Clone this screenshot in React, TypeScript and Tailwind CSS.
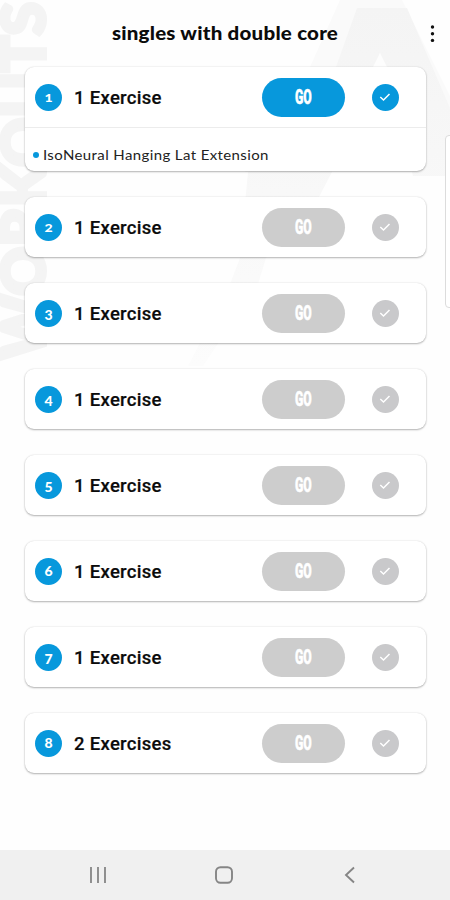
import { clsx } from 'clsx';

interface Workout {
  id: number;
  label: string;
  // old-style numerals: 1 and 2 sit low, 3 4 5 7 hang, 6 and 8 stand tall
  numeral: string;
  active?: boolean;
  exercises?: string[];
}

const workouts: Workout[] = [
  { id: 1, label: '1 Exercise', numeral: 'text-[14px] scale-y-[0.8] pt-px', active: true, exercises: ['IsoNeural Hanging Lat Extension'] },
  { id: 2, label: '1 Exercise', numeral: 'text-[14px] scale-y-[0.8] pt-px' },
  { id: 3, label: '1 Exercise', numeral: 'text-[14px] pt-[3px]' },
  { id: 4, label: '1 Exercise', numeral: 'text-[14px] pt-[3px]' },
  { id: 5, label: '1 Exercise', numeral: 'text-[14px] pt-[3px]' },
  { id: 6, label: '1 Exercise', numeral: 'text-[14px]' },
  { id: 7, label: '1 Exercise', numeral: 'text-[14px] pt-[3px]' },
  { id: 8, label: '2 Exercises', numeral: 'text-[14px]' },
];

const Watermark = () => (
  <svg className="pointer-events-none absolute left-0 top-0" width="450" height="400" viewBox="0 0 450 400" aria-hidden="true">
    <defs>
      <linearGradient id="leg" x1="0" y1="0" x2="0" y2="1">
        <stop offset="0" stopColor="#f4f4f4" />
        <stop offset="0.4" stopColor="#f7f7f7" />
        <stop offset="1" stopColor="#fcfcfc" />
      </linearGradient>
    </defs>
    <path d="M340 0H402L450 96V172H245L310 67Z" fill="#fafafa" />
    <path d="M357 8H407L450 108V176H413L380 53L332 172L319 197L266 258L258 284L203 366H188L230 284L240 258L248 172L336 67Z" fill="url(#leg)" />
    <path d="M380 53L387 67H373Z" fill="#fdfdfd" />
    <text
      transform="translate(44.5 359) rotate(-90)"
      textLength="357"
      lengthAdjust="spacingAndGlyphs"
      fill="#f4f4f4"
      stroke="#f4f4f4"
      strokeWidth="4"
      fontFamily="Lato, sans-serif"
      fontWeight="900"
      fontSize="60"
    >
      WORKOUTS
    </text>
  </svg>
);

const CheckBadge = ({ active }: { active?: boolean }) => (
  <span className={clsx('flex size-[27px] items-center justify-center rounded-full', active ? 'bg-[#0798dc]' : 'bg-[#c9c9cb]')}>
    <svg width="12" height="10" viewBox="0 0 12 10" fill="none" stroke="white" strokeWidth="1.5">
      <path d="M1.3 5L4.5 8L10.5 2" />
    </svg>
  </span>
);

const WorkoutCard = ({ workout }: { workout: Workout }) => {
  const { id, label, numeral, active, exercises } = workout;
  return (
    <section className="rounded-[9px] bg-white shadow-[0_1px_2px_rgba(0,0,0,0.28),0_0_2px_rgba(0,0,0,0.12)]">
      <div className="flex h-[60px] items-center pl-[10px] pr-[27.5px]">
        <span className="flex size-[27px] items-center justify-center rounded-full bg-[#0798dc]">
          <span className={clsx("font-['Lato',sans-serif] font-black leading-none text-white", numeral)}>{id}</span>
        </span>
        <h2 className="ml-[12px] flex-1 pt-[2px] font-['Roboto',sans-serif] text-[18.5px] font-medium leading-[26px] tracking-[0.3px] text-[#0b0b0b] [-webkit-text-stroke:0.2px_#0b0b0b]">{label}</h2>
        <button
          className={clsx(
            'flex h-[39px] w-[83px] items-center justify-center rounded-full text-white',
            active ? 'bg-[#0798dc]' : 'bg-[#cdcdcd]',
          )}
        >
          <span className="scale-x-[0.58] font-['Roboto',sans-serif] text-[21px] font-black leading-none [-webkit-text-stroke:0.5px_white]">GO</span>
        </button>
        <div className="ml-[27px]">
          <CheckBadge active={active} />
        </div>
      </div>
      {exercises && (
        <ul className="flex h-[44px] items-end border-t border-[#ececec] pb-[6px] pl-[8px]">
          {exercises.map((name) => (
            <li key={name} className="flex items-center gap-[4px]">
              <span className="size-[6px] rounded-full bg-[#0798dc]" />
              <span className="origin-left scale-x-[1.07] font-['Lato',sans-serif] text-[14px] leading-5 tracking-[0.37px] text-[#222]">{name}</span>
            </li>
          ))}
        </ul>
      )}
    </section>
  );
};

const NavBar = () => (
  <nav className="flex h-[50px] items-center bg-[#f0f0f0] pl-[89px] text-[#858585]">
    <svg width="18" height="18" viewBox="0 0 18 18" stroke="currentColor" strokeWidth="1.8">
      <path d="M2 1V17M9 1V17M16 1V17" />
    </svg>
    <svg className="ml-[107px]" width="20" height="18" viewBox="0 0 20 18" fill="none" stroke="currentColor" strokeWidth="1.9">
      <rect x="2" y="1.2" width="16" height="15.6" rx="4.5" />
    </svg>
    <svg className="ml-[109px]" width="14" height="18" viewBox="0 0 14 18" fill="none" stroke="currentColor" strokeWidth="1.9">
      <path d="M11 1.5L3 9L11 16.5" />
    </svg>
  </nav>
);

export default function App() {
  return (
    <div className="relative flex h-[900px] w-[450px] flex-col overflow-hidden bg-[#fefefe]">
      <Watermark />
      <header className="relative flex h-[67px] items-center justify-end pr-[15px]">
        <h1 className="absolute inset-x-0 top-[20px] scale-x-[1.08] text-center font-['Lato',sans-serif] text-[19px] font-black leading-[25px] tracking-[0.2px] text-[#0b0b0b]">
          singles with double core
        </h1>
        <svg width="5" height="18" viewBox="0 0 5 18" fill="#111">
          <circle cx="2.5" cy="2" r="1.7" />
          <circle cx="2.5" cy="8.7" r="1.7" />
          <circle cx="2.5" cy="15.4" r="1.7" />
        </svg>
      </header>
      <main className="relative flex flex-1 flex-col gap-[26px] pl-[25px] pr-[24px]">
        {workouts.map((workout) => (
          <WorkoutCard key={workout.id} workout={workout} />
        ))}
      </main>
      {/* edge panel handle */}
      <div className="absolute -right-1 top-[135px] h-[173px] w-[9px] rounded-l-[4px] border border-[#dcdcdc] bg-white" />
      <NavBar />
    </div>
  );
}
